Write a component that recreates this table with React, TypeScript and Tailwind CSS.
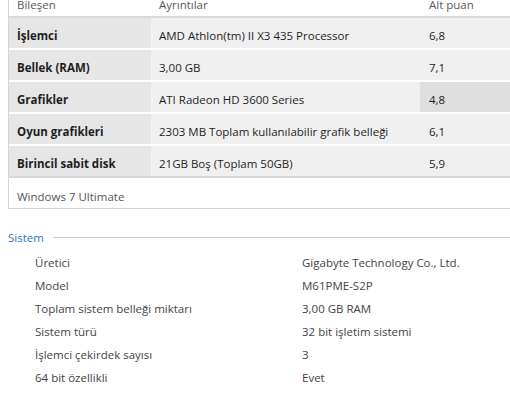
const scores = [
  { name: "İşlemci", detail: "AMD Athlon(tm) II X3 435 Processor", score: "6,8" },
  { name: "Bellek (RAM)", detail: "3,00 GB", score: "7,1" },
  { name: "Grafikler", detail: "ATI Radeon HD 3600 Series", score: "4,8", lowest: true },
  { name: "Oyun grafikleri", detail: "2303 MB Toplam kullanılabilir grafik belleği", score: "6,1" },
  { name: "Birincil sabit disk", detail: "21GB Boş (Toplam 50GB)", score: "5,9" },
];

const system = [
  ["Üretici", "Gigabyte Technology Co., Ltd."],
  ["Model", "M61PME-S2P"],
  ["Toplam sistem belleği miktarı", "3,00 GB RAM"],
  ["Sistem türü", "32 bit işletim sistemi"],
  ["İşlemci çekirdek sayısı", "3"],
  ["64 bit özellikli", "Evet"],
];

export default function App() {
  return (
    <div className="w-[510px] h-[397px] overflow-hidden bg-white text-[11.5px] font-['Open_Sans',sans-serif] text-[#1e1e1e]">
      {/* score table */}
      <div className="-mt-[8px] ml-[8px] border-l border-b border-[#d5d5d5]">
        <div className="flex h-[26px] items-center border-b-2 border-[#d9d9d9] pt-[1px] text-[#5a5a5a]">
          <div className="w-[142px] pl-[8px]">Bileşen</div>
          <div className="w-[269px] pl-[8px]">Ayrıntılar</div>
          <div className="flex-1 pl-[9px]">Alt puan</div>
        </div>
        {scores.map((r, i) => (
          <div
            key={r.name}
            className={`flex h-[30px] ${i < scores.length - 1 ? "mb-[2px]" : ""}`}
          >
            <div className="flex w-[142px] items-center bg-[#e6e6e6] pl-[8px] pt-[6px] font-bold">{r.name}</div>
            <div className="flex w-[269px] items-center bg-[#f0f0f0] pl-[8px] pt-[6px]">{r.detail}</div>
            <div
              className={`flex flex-1 items-center pl-[9px] pt-[6px] ${r.lowest ? "bg-[#dedede]" : "bg-[#f0f0f0]"}`}
            >
              {r.score}
            </div>
          </div>
        ))}
        <div className="flex h-[32px] items-center border-t-2 border-[#d9d9d9] pl-[8px] pt-[7px] text-[#555]">
          Windows 7 Ultimate
        </div>
      </div>

      {/* system section */}
      <div className="mt-[20px] flex items-center pl-[8px]">
        <span className="text-[#2b79bd]">Sistem</span>
        <div className="ml-[9px] h-px flex-1 bg-[#cfcfcf]" />
      </div>
      <div className="mt-[5px] flex flex-col text-[#444]">
        {system.map(([k, v]) => (
          <div key={k} className="flex h-[23px] items-center">
            <div className="w-[302px] pl-[35px]">{k}</div>
            <div>{v}</div>
          </div>
        ))}
      </div>
    </div>
  );
}
